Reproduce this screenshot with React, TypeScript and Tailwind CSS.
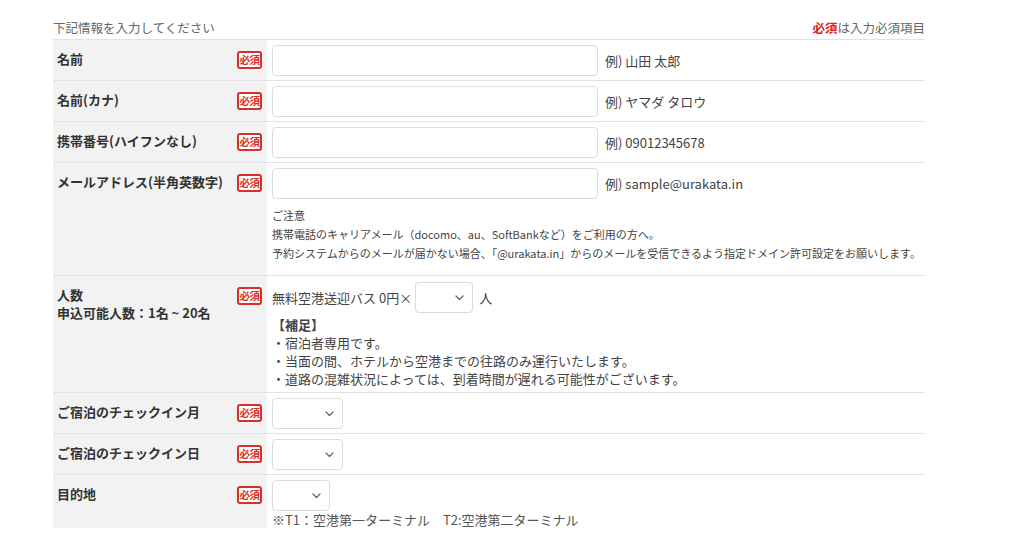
import React from 'react';

const font = { fontFamily: '"Noto Sans CJK JP", "Noto Sans", sans-serif' };

function Required() {
  return (
    <span className="mt-[1px] flex h-[18px] w-[25px] shrink-0 items-center justify-center rounded-[3px] border-[2px] border-[#d4312c] bg-white text-[10.5px] font-bold leading-none tracking-[-0.5px] text-[#d4312c]">
      必須
    </span>
  );
}

function Chevron() {
  return (
    <svg
      className="pointer-events-none absolute right-[9px] top-1/2 -translate-y-1/2"
      width="9"
      height="6"
      viewBox="0 0 9 6"
      fill="none"
    >
      <path d="M1 1l3.5 3.5L8 1" stroke="#666" strokeWidth="1.3" strokeLinecap="round" strokeLinejoin="round" />
    </svg>
  );
}

function Select({ width }: { width: string }) {
  return (
    <div className={`relative h-[31px] ${width}`}>
      <select className="h-full w-full appearance-none rounded-[4px] border border-[#dcdcdc] bg-white" />
      <Chevron />
    </div>
  );
}

function TextInput() {
  return <input className="h-[31px] w-[326px] rounded-[4px] border border-[#dcdcdc] bg-white" />;
}

function Row({
  label,
  children,
  last,
}: {
  label: React.ReactNode;
  children: React.ReactNode;
  last?: boolean;
}) {
  return (
    <div className="flex border-t border-[#e2e2e2]">
      <div className="flex w-[214px] shrink-0 items-start justify-between bg-[#f2f2f2] pl-[4px] pr-[5px] pt-[10px]">
        <div className="text-[13px] font-bold leading-[18px] text-[#333]">{label}</div>
        <Required />
      </div>
      <div className={`flex-1 pl-[5px] pt-[5px] ${last ? 'pb-0' : 'pb-[4px]'}`}>{children}</div>
    </div>
  );
}

function InputWithExample({ example }: { example: string }) {
  return (
    <div className="flex items-center gap-[7px]">
      <TextInput />
      <span className="text-[13px] text-[#444]">{example}</span>
    </div>
  );
}

export default function App() {
  return (
    <div className="min-h-[538px] bg-white" style={font}>
      <div className="ml-[53px] w-[872px] pt-[19px]">
        <div className="mb-[2px] flex items-center justify-between text-[12.5px] leading-[18px] text-[#666]">
          <span>下記情報を入力してください</span>
          <span>
            <span className="font-bold text-[#e0201b]">必須</span>は入力必須項目
          </span>
        </div>

        <Row label="名前">
          <InputWithExample example="例) 山田 太郎" />
        </Row>
        <Row label="名前(カナ)">
          <InputWithExample example="例) ヤマダ タロウ" />
        </Row>
        <Row label="携帯番号(ハイフンなし)">
          <InputWithExample example="例) 09012345678" />
        </Row>
        <Row label="メールアドレス(半角英数字)">
          <InputWithExample example="例) sample@urakata.in" />
          <div className="mb-[8px] mt-[7px] text-[11px] leading-[19px] text-[#444]">
            <div>ご注意</div>
            <div>携帯電話のキャリアメール（docomo、au、SoftBankなど）をご利用の方へ。</div>
            <div>予約システムからのメールが届かない場合、「@urakata.in」からのメールを受信できるよう指定ドメイン許可設定をお願いします。</div>
          </div>
        </Row>
        <Row
          label={
            <>
              <div>人数</div>
              <div>申込可能人数：1名 ~ 20名</div>
            </>
          }
        >
          <div className="flex items-center pt-[1px] text-[13px] text-[#444]">
            <span>無料空港送迎バス 0円×</span>
            <div className="ml-[3px] mr-[6px]">
              <Select width="w-[58px]" />
            </div>
            <span>人</span>
          </div>
          <div className="mt-[3px] text-[13px] leading-[18px] text-[#444]">
            <div className="font-bold">【補足】</div>
            <div>・宿泊者専用です。</div>
            <div>・当面の間、ホテルから空港までの往路のみ運行いたします。</div>
            <div>・道路の混雑状況によっては、到着時間が遅れる可能性がございます。</div>
          </div>
        </Row>
        <Row label="ご宿泊のチェックイン月">
          <Select width="w-[71px]" />
        </Row>
        <Row label="ご宿泊のチェックイン日">
          <Select width="w-[71px]" />
        </Row>
        <Row label="目的地" last>
          <Select width="w-[58px]" />
          <div className="text-[13px] leading-[17px] text-[#555]">※T1：空港第一ターミナル　T2:空港第二ターミナル</div>
        </Row>
      </div>
    </div>
  );
}
